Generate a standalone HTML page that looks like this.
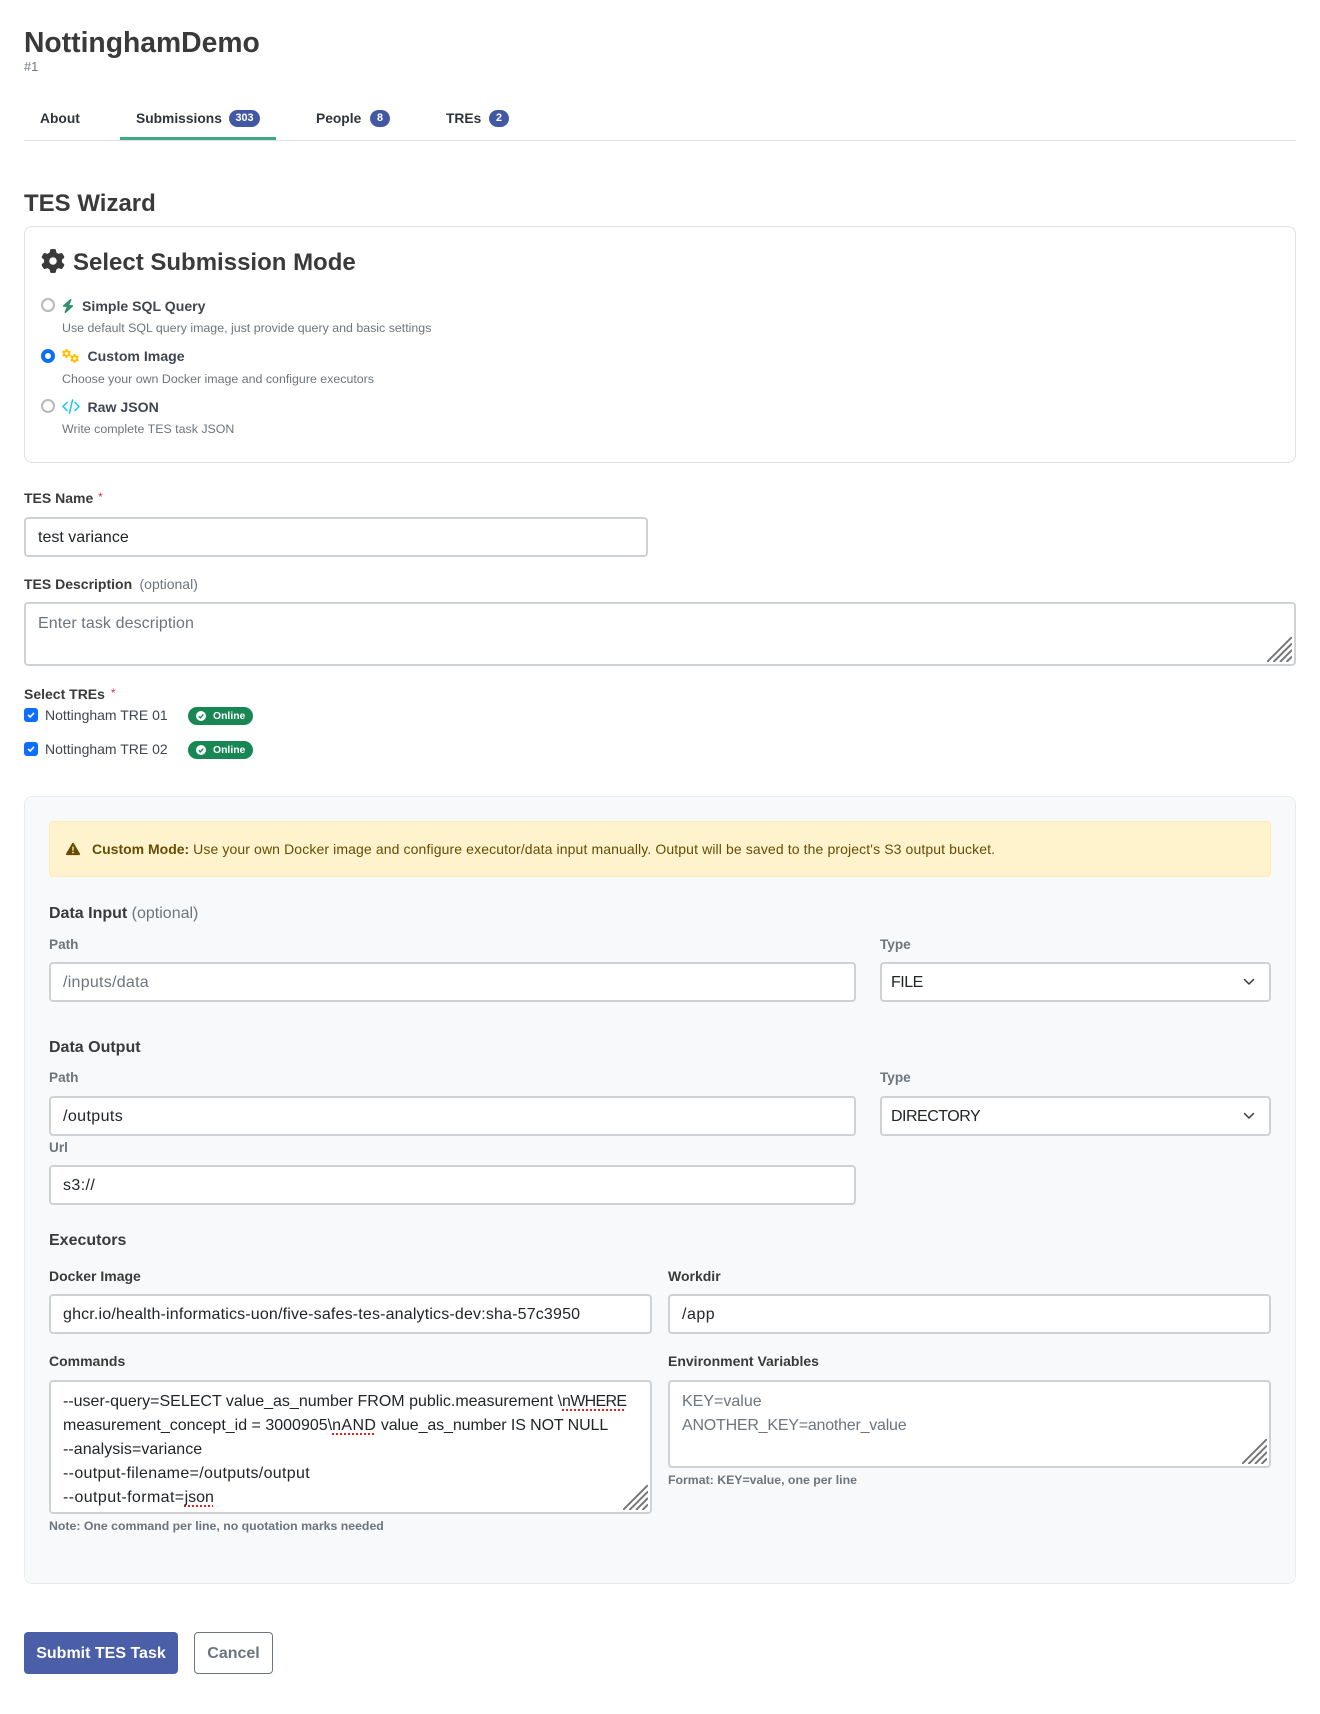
<!DOCTYPE html>
<html lang="en">
<head>
<meta charset="utf-8">
<title>NottinghamDemo - TES Wizard</title>
<style>
html,body{margin:0;padding:0;background:#fff}
body{position:relative;width:1320px;height:1714px;overflow:hidden;font-family:"Liberation Sans",Arial,sans-serif;color:#212529}
.t{position:absolute;white-space:nowrap;line-height:20px;height:20px}
.b{font-weight:700}
.lab{font-size:14px;font-weight:700;color:#3a3a3a}
.mut{font-size:13.6px;font-weight:700;color:#6c757d}
.h{font-size:16px;font-weight:700;color:#3a3a3a}
.desc{font-size:12.4px;color:#6c757d}
.opt{font-size:12.3px;font-weight:700;color:#6c757d}
.v{font-size:16px;color:#212529}
.p{font-size:16px;color:#6c757d}
.box{position:absolute;box-sizing:border-box;background:#fff;border:2px solid #ced2d4;border-radius:4px}
.tab{font-size:13.8px;font-weight:700;color:#2f343a}
.pill{position:absolute;box-sizing:border-box;height:17px;line-height:17px;border-radius:9px;background:#4358a5;color:#fff;font-size:10.8px;font-weight:700;text-align:center}
.mode{font-size:14.1px;font-weight:700;color:#3f4650}
.radio{position:absolute;box-sizing:border-box;width:14px;height:14px;border-radius:50%;border:2px solid #b9b9b9;background:#fff}
.star{color:#dc3545;font-size:12px;font-weight:400;margin-left:1px}
.chk{position:absolute;left:24px;width:14px;height:14px;border-radius:3px;background:#0d6efd}
.online{position:absolute;left:188px;width:65px;height:18px;border-radius:9px;background:#198754}
.online span{position:absolute;left:25px;top:0;line-height:20px;font-size:10.4px;font-weight:700;color:#fff}
.sp{text-decoration:underline dotted #e02020;text-decoration-thickness:2px;text-underline-offset:3px}
svg{position:absolute;display:block}
</style>
</head>
<body>

<div class="t b" style="left:24px;top:31px;font-size:28.3px;height:20px;color:#3a3a3a;line-height:22px">NottinghamDemo</div>
<div class="t" style="left:24px;top:57px;font-size:12.8px;color:#6c757d">#1</div>

<div class="t tab" style="left:40px;top:109px">About</div>
<div class="t tab" style="left:136px;top:109px">Submissions</div>
<div class="pill" style="left:229px;top:110px;width:31px">303</div>
<div class="t tab" style="left:316px;top:109px">People</div>
<div class="pill" style="left:370px;top:110px;width:20px">8</div>
<div class="t tab" style="left:446px;top:109px">TREs</div>
<div class="pill" style="left:489px;top:110px;width:20px">2</div>
<div style="position:absolute;left:24px;top:140px;width:1272px;height:1px;background:#dee2e6"></div>
<div style="position:absolute;left:120px;top:137px;width:156px;height:3px;background:#3aa986"></div>

<div class="t b" style="left:24px;top:194px;font-size:24px;line-height:20px;color:#3a3a3a">TES Wizard</div>

<div style="position:absolute;box-sizing:border-box;left:24px;top:226px;width:1272px;height:237px;border:1px solid #dfe0e6;border-radius:8px;background:#fff"></div>
<svg style="left:41px;top:249px" width="24" height="24" viewBox="0 0 512 512" fill="#3a3a3a"><path d="M495.9 166.6c3.2 8.7 .5 18.4-6.4 24.6l-43.3 39.4c1.1 8.3 1.7 16.8 1.7 25.4s-.6 17.1-1.7 25.4l43.3 39.4c6.9 6.2 9.6 15.9 6.4 24.6c-4.4 11.9-9.7 23.3-15.8 34.3l-4.7 8.1c-6.6 11-14 21.4-22.1 31.2c-5.9 7.2-15.7 9.6-24.5 6.8l-55.7-17.7c-13.4 10.3-28.2 18.9-44 25.4l-12.5 57.1c-2 9.1-9 16.3-18.2 17.8c-13.8 2.3-28 3.5-42.5 3.5s-28.7-1.2-42.5-3.5c-9.2-1.5-16.2-8.7-18.2-17.8l-12.5-57.1c-15.8-6.5-30.6-15.1-44-25.4L83.1 425.9c-8.8 2.8-18.6 .3-24.5-6.8c-8.1-9.8-15.5-20.2-22.1-31.2l-4.7-8.1c-6.1-11-11.4-22.4-15.8-34.3c-3.2-8.7-.5-18.4 6.4-24.6l43.3-39.4C64.6 273.1 64 264.6 64 256s.6-17.1 1.7-25.4L22.4 191.2c-6.9-6.2-9.6-15.9-6.4-24.6c4.4-11.9 9.7-23.3 15.8-34.3l4.7-8.1c6.6-11 14-21.4 22.1-31.2c5.9-7.2 15.7-9.6 24.5-6.8l55.7 17.7c13.4-10.3 28.2-18.9 44-25.4l12.5-57.1c2-9.1 9-16.3 18.2-17.8C227.3 1.2 241.5 0 256 0s28.7 1.2 42.5 3.5c9.2 1.5 16.2 8.7 18.2 17.8l12.5 57.1c15.8 6.5 30.6 15.1 44 25.4l55.7-17.7c8.8-2.8 18.6-.3 24.5 6.8c8.1 9.8 15.5 20.2 22.1 31.2l4.7 8.1c6.1 11 11.4 22.4 15.8 34.3zM256 336a80 80 0 1 0 0-160 80 80 0 1 0 0 160z"/></svg>
<div class="t b" style="left:73px;top:253px;font-size:24px;color:#3a3a3a">Select Submission Mode</div>

<div class="radio" style="left:41px;top:298px"></div>
<svg style="left:62px;top:299px" width="12" height="14" viewBox="0 0 448 512" fill="#2f8f6f" preserveAspectRatio="none"><path d="M349.4 44.6c5.9-13.7 1.5-29.7-10.6-38.5s-28.3-8-39.5 1.8l-256 224c-10 8.8-13.6 22.9-8.9 35.3S50.7 288 64 288H175.5L98.6 467.4c-5.9 13.7-1.5 29.7 10.6 38.5s28.3 8 39.5-1.8l256-224c10-8.8 13.6-22.9 8.9-35.3s-16.6-20.7-30-20.7H272.5L349.4 44.6z"/></svg>
<div class="t mode" style="left:82px;top:296px">Simple SQL Query</div>
<div class="t desc" style="left:62px;top:318px">Use default SQL query image, just provide query and basic settings</div>

<div class="radio" style="left:41px;top:349px;border:4px solid #0d6efd"></div>
<svg style="left:62px;top:349px" width="9" height="9" viewBox="0 0 512 512" fill="#ffc107"><path d="M495.9 166.6c3.2 8.7 .5 18.4-6.4 24.6l-43.3 39.4c1.1 8.3 1.7 16.8 1.7 25.4s-.6 17.1-1.7 25.4l43.3 39.4c6.9 6.2 9.6 15.9 6.4 24.6c-4.4 11.9-9.7 23.3-15.8 34.3l-4.7 8.1c-6.6 11-14 21.4-22.1 31.2c-5.9 7.2-15.7 9.6-24.5 6.8l-55.7-17.7c-13.4 10.3-28.2 18.9-44 25.4l-12.5 57.1c-2 9.1-9 16.3-18.2 17.8c-13.8 2.3-28 3.5-42.5 3.5s-28.7-1.2-42.5-3.5c-9.2-1.5-16.2-8.7-18.2-17.8l-12.5-57.1c-15.8-6.5-30.6-15.1-44-25.4L83.1 425.9c-8.8 2.8-18.6 .3-24.5-6.8c-8.1-9.8-15.5-20.2-22.1-31.2l-4.7-8.1c-6.1-11-11.4-22.4-15.8-34.3c-3.2-8.7-.5-18.4 6.4-24.6l43.3-39.4C64.6 273.1 64 264.6 64 256s.6-17.1 1.7-25.4L22.4 191.2c-6.9-6.2-9.6-15.9-6.4-24.6c4.4-11.9 9.7-23.3 15.8-34.3l4.7-8.1c6.6-11 14-21.4 22.1-31.2c5.9-7.2 15.7-9.6 24.5-6.8l55.7 17.7c13.4-10.3 28.2-18.9 44-25.4l12.5-57.1c2-9.1 9-16.3 18.2-17.8C227.3 1.2 241.5 0 256 0s28.7 1.2 42.5 3.5c9.2 1.5 16.2 8.7 18.2 17.8l12.5 57.1c15.8 6.5 30.6 15.1 44 25.4l55.7-17.7c8.8-2.8 18.6-.3 24.5 6.8c8.1 9.8 15.5 20.2 22.1 31.2l4.7 8.1c6.1 11 11.4 22.4 15.8 34.3zM256 336a80 80 0 1 0 0-160 80 80 0 1 0 0 160z"/></svg>
<svg style="left:70px;top:354px" width="9" height="9" viewBox="0 0 512 512" fill="#ffc107"><path d="M495.9 166.6c3.2 8.7 .5 18.4-6.4 24.6l-43.3 39.4c1.1 8.3 1.7 16.8 1.7 25.4s-.6 17.1-1.7 25.4l43.3 39.4c6.9 6.2 9.6 15.9 6.4 24.6c-4.4 11.9-9.7 23.3-15.8 34.3l-4.7 8.1c-6.6 11-14 21.4-22.1 31.2c-5.9 7.2-15.7 9.6-24.5 6.8l-55.7-17.7c-13.4 10.3-28.2 18.9-44 25.4l-12.5 57.1c-2 9.1-9 16.3-18.2 17.8c-13.8 2.3-28 3.5-42.5 3.5s-28.7-1.2-42.5-3.5c-9.2-1.5-16.2-8.7-18.2-17.8l-12.5-57.1c-15.8-6.5-30.6-15.1-44-25.4L83.1 425.9c-8.8 2.8-18.6 .3-24.5-6.8c-8.1-9.8-15.5-20.2-22.1-31.2l-4.7-8.1c-6.1-11-11.4-22.4-15.8-34.3c-3.2-8.7-.5-18.4 6.4-24.6l43.3-39.4C64.6 273.1 64 264.6 64 256s.6-17.1 1.7-25.4L22.4 191.2c-6.9-6.2-9.6-15.9-6.4-24.6c4.4-11.9 9.7-23.3 15.8-34.3l4.7-8.1c6.6-11 14-21.4 22.1-31.2c5.9-7.2 15.7-9.6 24.5-6.8l55.7 17.7c13.4-10.3 28.2-18.9 44-25.4l12.5-57.1c2-9.1 9-16.3 18.2-17.8C227.3 1.2 241.5 0 256 0s28.7 1.2 42.5 3.5c9.2 1.5 16.2 8.7 18.2 17.8l12.5 57.1c15.8 6.5 30.6 15.1 44 25.4l55.7-17.7c8.8-2.8 18.6-.3 24.5 6.8c8.1 9.8 15.5 20.2 22.1 31.2l4.7 8.1c6.1 11 11.4 22.4 15.8 34.3zM256 336a80 80 0 1 0 0-160 80 80 0 1 0 0 160z"/></svg>
<div class="t mode" style="left:87.5px;top:346px">Custom Image</div>
<div class="t desc" style="left:62px;top:369px">Choose your own Docker image and configure executors</div>

<div class="radio" style="left:41px;top:399px"></div>
<svg style="left:62px;top:399px" width="18" height="15" viewBox="0 0 18 15" fill="none" stroke="#0dcaf0" stroke-width="1.5" stroke-linecap="round" stroke-linejoin="round"><path d="M5 3.5 1 7.5l4 4M13 3.5l4 4-4 4M10.5 1 7.5 14"/></svg>
<div class="t mode" style="left:87.5px;top:397px">Raw JSON</div>
<div class="t desc" style="left:62px;top:419px">Write complete TES task JSON</div>

<div class="t lab" style="left:24px;top:488px">TES Name <span class="star" style="position:relative;top:-2px">*</span></div>
<div class="box" style="left:24px;top:517px;width:624px;height:40px"></div>
<div class="t v" style="left:38px;top:528px">test variance</div>

<div class="t lab" style="left:24px;top:574px">TES Description</div>
<div class="t" style="left:139.5px;top:574px;font-size:14px;color:#6c757d">(optional)</div>
<div class="box" style="left:24px;top:602px;width:1272px;height:64px"></div>
<div class="t p" style="left:38px;top:614px;letter-spacing:.1px">Enter task description</div>
<svg style="left:1267px;top:637px" width="25" height="25" viewBox="0 0 25 25" stroke="#777" stroke-width="2"><path d="M0 25 25 0M6.5 25 25 6.5M13 25 25 13M19.5 25 25 19.5"/></svg>

<div class="t lab" style="left:24px;top:684px">Select TREs <span class="star" style="position:relative;top:-2px;margin-left:2px">*</span></div>

<div class="chk" style="top:708px"></div>
<svg style="left:24px;top:708px" width="14" height="14" viewBox="0 0 14 14" fill="none" stroke="#fff" stroke-width="1.6" stroke-linecap="round" stroke-linejoin="round"><path d="M4.5 7.3 6.2 9l3.3-3.6"/></svg>
<div class="t" style="left:45px;top:705px;font-size:14px;color:#3f4650">Nottingham TRE 01</div>
<div class="online" style="top:707px"><span>Online</span></div>
<svg style="left:196px;top:711px" width="10" height="10" viewBox="0 0 10 10"><circle cx="5" cy="5" r="5" fill="#fff"/><path d="M2.8 5.2 4.4 6.8 7.2 3.6" fill="none" stroke="#198754" stroke-width="1.4"/></svg>

<div class="chk" style="top:742px"></div>
<svg style="left:24px;top:742px" width="14" height="14" viewBox="0 0 14 14" fill="none" stroke="#fff" stroke-width="1.6" stroke-linecap="round" stroke-linejoin="round"><path d="M4.5 7.3 6.2 9l3.3-3.6"/></svg>
<div class="t" style="left:45px;top:739px;font-size:14px;color:#3f4650">Nottingham TRE 02</div>
<div class="online" style="top:741px"><span>Online</span></div>
<svg style="left:196px;top:745px" width="10" height="10" viewBox="0 0 10 10"><circle cx="5" cy="5" r="5" fill="#fff"/><path d="M2.8 5.2 4.4 6.8 7.2 3.6" fill="none" stroke="#198754" stroke-width="1.4"/></svg>

<div style="position:absolute;box-sizing:border-box;left:24px;top:796px;width:1272px;height:788px;background:#f8f9fa;border:1px solid #e9ecef;border-radius:8px"></div>

<div style="position:absolute;box-sizing:border-box;left:49px;top:821px;width:1222px;height:56px;background:#fff3cd;border:1px solid #ffecb5;border-radius:4px"></div>
<svg style="left:66px;top:842px" width="14" height="14" viewBox="0 0 512 512" fill="#664d03"><path d="M256 32c14.2 0 27.3 7.5 34.5 19.8l216 368c7.3 12.4 7.3 27.7 .2 40.1S486.3 480 472 480H40c-14.3 0-27.6-7.7-34.7-20.1s-7-27.8 .2-40.1l216-368C228.7 39.5 241.8 32 256 32zm0 128c-13.3 0-24 10.7-24 24V296c0 13.3 10.7 24 24 24s24-10.7 24-24V184c0-13.3-10.7-24-24-24zm32 224a32 32 0 1 0 -64 0 32 32 0 1 0 64 0z"/></svg>
<div class="t" style="left:92px;top:839px;font-size:14px;color:#664d03"><b>Custom Mode:</b> <span style="letter-spacing:.115px">Use your own Docker image and configure executor/data input manually. Output will be saved to the project's S3 output bucket.</span></div>

<div class="t h" style="left:49px;top:904px">Data Input <span style="font-weight:400;color:#6c757d">(optional)</span></div>

<div class="t mut" style="left:49px;top:935px">Path</div>
<div class="box" style="left:49px;top:962px;width:807px;height:40px"></div>
<div class="t p" style="left:63px;top:973px;letter-spacing:.27px">/inputs/data</div>
<div class="t mut" style="left:880px;top:935px">Type</div>
<div class="box" style="left:880px;top:962px;width:391px;height:40px"></div>
<div class="t v" style="left:891px;top:973px;letter-spacing:-.5px">FILE</div>
<svg style="left:1243px;top:978px" width="12" height="8" viewBox="0 0 12 8" fill="none" stroke="#343a40" stroke-width="1.5" stroke-linecap="round" stroke-linejoin="round"><path d="M1.5 1.5 6 6l4.5-4.5"/></svg>

<div class="t h" style="left:49px;top:1037.5px">Data Output</div>

<div class="t mut" style="left:49px;top:1068px">Path</div>
<div class="box" style="left:49px;top:1096px;width:807px;height:40px"></div>
<div class="t v" style="left:63px;top:1107px;letter-spacing:.4px">/outputs</div>
<div class="t mut" style="left:880px;top:1068px">Type</div>
<div class="box" style="left:880px;top:1096px;width:391px;height:40px"></div>
<div class="t v" style="left:891px;top:1107px;letter-spacing:-.5px">DIRECTORY</div>
<svg style="left:1243px;top:1112px" width="12" height="8" viewBox="0 0 12 8" fill="none" stroke="#343a40" stroke-width="1.5" stroke-linecap="round" stroke-linejoin="round"><path d="M1.5 1.5 6 6l4.5-4.5"/></svg>

<div class="t mut" style="left:49px;top:1138px">Url</div>
<div class="box" style="left:49px;top:1165px;width:807px;height:40px"></div>
<div class="t v" style="left:63px;top:1176px;letter-spacing:.4px">s3://</div>

<div class="t h" style="left:49px;top:1230.5px">Executors</div>

<div class="t lab" style="left:49px;top:1266px">Docker Image</div>
<div class="box" style="left:49px;top:1294px;width:603px;height:40px"></div>
<div class="t v" style="left:63px;top:1305px;letter-spacing:.17px">ghcr.io/health-informatics-uon/five-safes-tes-analytics-dev:sha-57c3950</div>
<div class="t lab" style="left:668px;top:1266px">Workdir</div>
<div class="box" style="left:668px;top:1294px;width:603px;height:40px"></div>
<div class="t v" style="left:682px;top:1305px;letter-spacing:.5px">/app</div>

<div class="t lab" style="left:49px;top:1351px">Commands</div>
<div class="box" style="left:49px;top:1380px;width:603px;height:134px"></div>
<div class="t v" style="left:63px;top:1390px;line-height:24px;height:24px">--user-query=SELECT value_as_number FROM public.measurement \<span class="sp" style="letter-spacing:-.7px">nWHERE</span></div>
<div class="t v" style="left:63px;top:1414px;line-height:24px;height:24px">measurement_concept_id = 3000905\<span class="sp" style="letter-spacing:.4px">nAND</span> <span style="letter-spacing:-.1px">value_as_number IS NOT NULL</span></div>
<div class="t v" style="left:63px;top:1438px;line-height:24px;height:24px;letter-spacing:.05px">--analysis=variance</div>
<div class="t v" style="left:63px;top:1462px;line-height:24px;height:24px;letter-spacing:.33px">--output-filename=/outputs/output</div>
<div class="t v" style="left:63px;top:1486px;line-height:24px;height:24px"><span style="letter-spacing:.4px">--output-format=</span><span class="sp">json</span></div>
<svg style="left:623px;top:1485px" width="25" height="25" viewBox="0 0 25 25" stroke="#777" stroke-width="2"><path d="M0 25 25 0M6.5 25 25 6.5M13 25 25 13M19.5 25 25 19.5"/></svg>
<div class="t opt" style="left:49px;top:1516px">Note: One command per line, no quotation marks needed</div>

<div class="t lab" style="left:668px;top:1351px">Environment Variables</div>
<div class="box" style="left:668px;top:1380px;width:603px;height:88px"></div>
<div class="t p" style="left:682px;top:1390px;line-height:24px;height:24px">KEY=value</div>
<div class="t p" style="left:682px;top:1414px;line-height:24px;height:24px;letter-spacing:-.22px">ANOTHER_KEY=another_value</div>
<svg style="left:1242px;top:1439px" width="25" height="25" viewBox="0 0 25 25" stroke="#777" stroke-width="2"><path d="M0 25 25 0M6.5 25 25 6.5M13 25 25 13M19.5 25 25 19.5"/></svg>
<div class="t opt" style="left:668px;top:1470px">Format: KEY=value, one per line</div>

<div style="position:absolute;left:24px;top:1632px;width:154px;height:42px;line-height:44px;background:#4a5fa8;border-radius:4px;color:#fff;font-size:16px;font-weight:700;text-align:center">Submit TES Task</div>
<div style="position:absolute;box-sizing:border-box;left:194px;top:1632px;width:79px;height:42px;line-height:42px;border:1px solid #6c757d;border-radius:4px;color:#6c757d;font-size:16px;font-weight:700;text-align:center">Cancel</div>

</body>
</html>
